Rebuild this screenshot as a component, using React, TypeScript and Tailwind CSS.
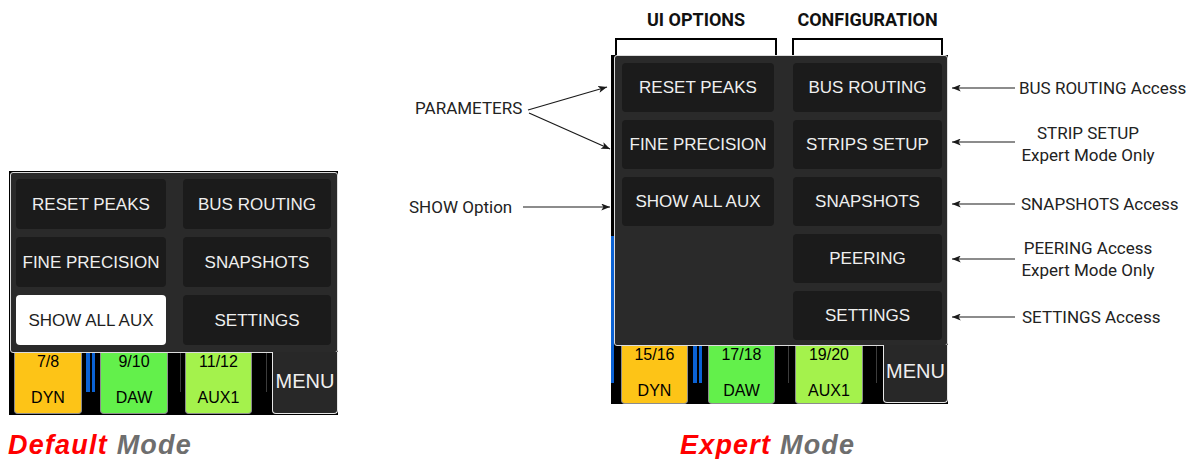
const sans = "font-['Liberation_Sans',Arial,sans-serif]";
const roboto = "font-['Roboto',Arial,sans-serif]";

const MenuButton = ({ label, active = false }: { label: string; active?: boolean }) => (
  <div
    className={`flex items-center justify-center rounded-[4px] text-[17px] leading-none ${
      active ? "bg-white text-[#1e1e1e]" : "bg-[#1b1b1b] text-[#efefef]"
    }`}
  >
    {label}
  </div>
);

const ChannelStrip = ({ top, bottom, className }: { top: string; bottom: string; className: string }) => (
  <div
    className={`flex shrink-0 flex-col items-center rounded-b-[4px] border-x border-b border-[#8c8c8c] text-[16px] leading-[18px] text-black ${className}`}
  >
    <span>{top}</span>
    <span className="mt-[18px]">{bottom}</span>
  </div>
);

const Meter = ({ h }: { h: string }) => (
  <div className={`flex shrink-0 gap-[2px] ${h}`}>
    <div className="w-[4px] bg-[#0b62d4]" />
    <div className="w-[3px] bg-[#0b62d4]" />
  </div>
);

const Menu = ({ className }: { className: string }) => (
  <div
    className={`relative -mt-px flex shrink-0 items-center justify-center rounded-b-[4px] border-x border-b border-[#e6e6e6] bg-[#282828] text-[20px] text-[#efefef] ${className}`}
  >
    MENU
  </div>
);

const DefaultMock = () => (
  <div className={`flex h-[244px] w-[329px] flex-col bg-black pl-px pt-px ${sans}`}>
    <div className="h-[181px] w-[328px] rounded-[3px] border border-[#dcdcdc] bg-[#2a2a2a] pl-[5px] pt-[6px]">
      <div className="grid grid-cols-[150px_148px] grid-rows-[50px_50px_50px] gap-x-[17px] gap-y-[8px]">
        <MenuButton label="RESET PEAKS" />
        <MenuButton label="BUS ROUTING" />
        <MenuButton label="FINE PRECISION" />
        <MenuButton label="SNAPSHOTS" />
        <MenuButton label="SHOW ALL AUX" active />
        <MenuButton label="SETTINGS" />
      </div>
    </div>
    <div className="flex h-[62px] items-start">
      <ChannelStrip top="7/8" bottom="DYN" className="ml-[4px] h-[61px] w-[68px] bg-[#fdc417]" />
      <div className="ml-[4px]">
        <Meter h="h-[39px]" />
      </div>
      <ChannelStrip top="9/10" bottom="DAW" className="ml-[5px] h-[61px] w-[68px] bg-[#63f04b]" />
      <div className="ml-[12px] h-[39px] w-px bg-[#3c3c3c]" />
      <ChannelStrip top="11/12" bottom="AUX1" className="ml-[4px] h-[61px] w-[67px] bg-[#a4f24c]" />
      <div className="ml-[14px] h-[39px] w-px bg-[#3c3c3c]" />
      <Menu className="ml-[5px] h-[62px] w-[66px] pb-[4px]" />
    </div>
  </div>
);

const ExpertMock = () => (
  <div className={`flex h-[349px] w-[337px] ${sans}`}>
    <div className="flex w-[3px] flex-col bg-black">
      <div className="h-[181px]" />
      <div className="h-[147px] bg-[#0b62d4]" />
    </div>
    <div className="flex w-[334px] flex-col bg-black">
      <div className="h-[291px] rounded-[3px] border border-[#dcdcdc] bg-[#2a2a2a] pl-[7px] pt-[7px]">
        <div className="grid grid-flow-col grid-cols-[152px_149px] grid-rows-[49px_49px_49px_49px_49px] gap-x-[19px] gap-y-[8px]">
          <MenuButton label="RESET PEAKS" />
          <MenuButton label="FINE PRECISION" />
          <MenuButton label="SHOW ALL AUX" />
          <div />
          <div />
          <MenuButton label="BUS ROUTING" />
          <MenuButton label="STRIPS SETUP" />
          <MenuButton label="SNAPSHOTS" />
          <MenuButton label="PEERING" />
          <MenuButton label="SETTINGS" />
        </div>
      </div>
      <div className="flex h-[58px] items-start">
        <ChannelStrip top="15/16" bottom="DYN" className="ml-[7px] h-[58px] w-[67px] bg-[#fdc417]" />
        <div className="ml-[5px]">
          <Meter h="h-[37px]" />
        </div>
        <ChannelStrip top="17/18" bottom="DAW" className="ml-[6px] h-[58px] w-[67px] bg-[#63f04b]" />
        <div className="ml-[13px] h-[37px] w-px bg-[#3c3c3c]" />
        <ChannelStrip top="19/20" bottom="AUX1" className="ml-[6px] h-[58px] w-[68px] bg-[#a4f24c]" />
        <div className="ml-[13px] h-[37px] w-px bg-[#3c3c3c]" />
        <Menu className="ml-[6px] h-[58px] w-[65px] pb-[5px]" />
      </div>
    </div>
  </div>
);

const ModeTitle = ({ first }: { first: string }) => (
  <div className={`text-[27px] font-bold italic leading-[30px] tracking-[1.2px] ${sans}`}>
    <span className="text-[#ff0000]">{first}</span> <span className="text-[#6e6e6e]">Mode</span>
  </div>
);

// callout arrows, drawn over the whole picture
const arrows: [number, number, number, number][] = [
  [528, 110, 607, 87],
  [529, 113, 610, 149],
  [523, 207, 610, 207],
  [1015, 88, 952, 88],
  [1015, 142, 952, 142],
  [1015, 204, 952, 204],
  [1015, 259, 952, 259],
  [1015, 317, 952, 317],
];

const Callouts = () => (
  <svg className="pointer-events-none absolute inset-0 h-full w-full" viewBox="0 0 1189 459">
    <defs>
      <marker id="head" viewBox="0 0 10 8" refX="10" refY="4" markerWidth="9" markerHeight="7" markerUnits="userSpaceOnUse" orient="auto">
        <path d="M0 0 L10 4 L0 8 L2.5 4 Z" fill="#1a1a1a" />
      </marker>
    </defs>
    {arrows.map(([x1, y1, x2, y2], i) => (
      <line key={i} x1={x1} y1={y1} x2={x2} y2={y2} stroke="#1a1a1a" strokeWidth="1.2" markerEnd="url(#head)" />
    ))}
  </svg>
);

const Label = ({ className, lines }: { className: string; lines: string[] }) => (
  <div className={`absolute whitespace-nowrap text-[17px] leading-[22px] text-[#222] ${roboto} ${className}`}>
    {lines.map((l) => (
      <div key={l}>{l}</div>
    ))}
  </div>
);

const App = (): React.ReactElement => {
  return (
    <div className="relative flex h-[459px] w-[1189px] items-start overflow-hidden bg-white">
      <div className="ml-[9px] mt-[171px] flex w-[329px] flex-col">
        <DefaultMock />
        <div className="-ml-px mt-[15px]">
          <ModeTitle first="Default" />
        </div>
      </div>

      <div className="ml-[273px] flex w-[337px] flex-col">
        <div className={`flex h-[38px] items-center text-[18px] font-bold text-[#111] ${roboto}`}>
          <div className="ml-[4px] w-[162px] text-center">UI OPTIONS</div>
          <div className="ml-[15px] w-[151px] text-center">CONFIGURATION</div>
        </div>
        <div className="flex h-[17px]">
          <div className="ml-[4px] w-[162px] border-x-2 border-t-2 border-black" />
          <div className="ml-[15px] w-[151px] border-x-2 border-t-2 border-black" />
        </div>
        <ExpertMock />
        <div className="mt-[26px] pl-[69px]">
          <ModeTitle first="Expert" />
        </div>
      </div>

      <Callouts />
      <Label className="left-[415px] top-[97px]" lines={["PARAMETERS"]} />
      <Label className="left-[409px] top-[196px]" lines={["SHOW Option"]} />
      <Label className="left-[1019px] top-[77px]" lines={["BUS ROUTING Access"]} />
      <Label className="left-[1008px] top-[122px] w-[160px] text-center" lines={["STRIP SETUP", "Expert Mode Only"]} />
      <Label className="left-[1021px] top-[193px]" lines={["SNAPSHOTS Access"]} />
      <Label className="left-[1008px] top-[237px] w-[160px] text-center" lines={["PEERING Access", "Expert Mode Only"]} />
      <Label className="left-[1022px] top-[306px]" lines={["SETTINGS Access"]} />
    </div>
  );
};

export default App;
